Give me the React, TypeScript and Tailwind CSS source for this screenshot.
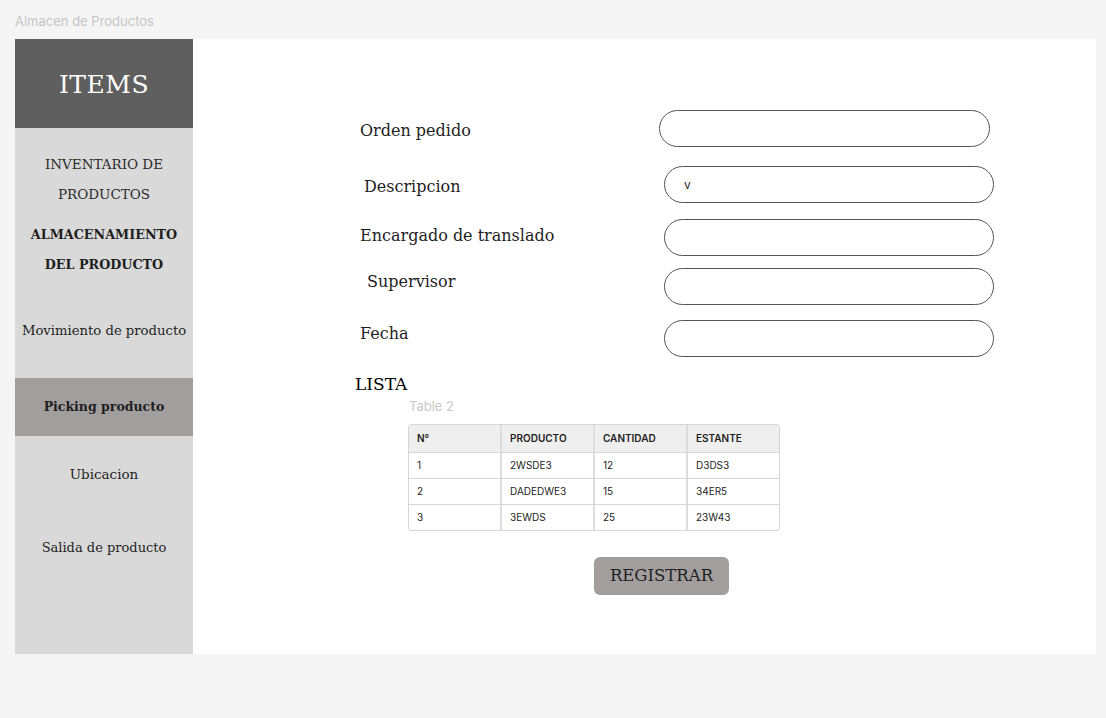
const serif = "font-['DejaVu_Serif',serif]";

const fields = [
  { label: "Orden pedido", row: "mt-[71px]", lbl: "pl-0 pt-[5px]", input: "ml-0 w-[331px]", value: "" },
  { label: "Descripcion", row: "mt-[19px]", lbl: "pl-[4px] pt-[5px]", input: "ml-[5px] w-[330px]", value: "v" },
  { label: "Encargado de translado", row: "mt-[16px]", lbl: "pl-0 pb-[3px]", input: "ml-[5px] w-[330px]", value: "" },
  { label: "Supervisor", row: "mt-[12px]", lbl: "pl-[7px] pb-[9px]", input: "ml-[5px] w-[330px]", value: "" },
  { label: "Fecha", row: "mt-[15px]", lbl: "pl-0 pb-[9px]", input: "ml-[5px] w-[330px]", value: "" },
];

const rows = [
  ["1", "2WSDE3", "12", "D3DS3"],
  ["2", "DADEDWE3", "15", "34ER5"],
  ["3", "3EWDS", "25", "23W43"],
];

const Sidebar = () => (
  <aside className={`w-[178px] shrink-0 bg-[#d9d9d9] text-[#1e1e1e] whitespace-nowrap ${serif}`}>
    <div className="h-[89px] bg-[#5f5f5f] flex items-center justify-center text-white text-[25px] tracking-[0.5px] pt-[3px]">
      ITEMS
    </div>
    <div className="mt-[21px] text-center text-[13.5px] leading-[30px] text-[#2a2a2a]">
      <div>INVENTARIO DE</div>
      <div>PRODUCTOS</div>
    </div>
    <div className="mt-[11px] text-center text-[12.75px] leading-[30px] font-bold">
      <div>ALMACENAMIENTO</div>
      <div>DEL PRODUCTO</div>
    </div>
    <div className="mt-[36px] text-center text-[13.2px] leading-[30px]">Movimiento de producto</div>
    <div className="mt-[32px] h-[58px] bg-[#a39e9e] flex items-center justify-center text-[12.5px] font-bold">
      Picking producto
    </div>
    <div className="mt-[23px] text-center text-[13.5px] leading-[30px]">Ubicacion</div>
    <div className="mt-[44px] text-center text-[13px] leading-[30px]">Salida de producto</div>
  </aside>
);

export default function App() {
  return (
    <div className="min-h-[718px] bg-[#f5f5f5] px-[15px] font-['Inter',sans-serif]">
      <div className="h-[39px] flex items-center text-[13px] text-[#c4c4c4] pt-[4px]">Almacen de Productos</div>
      <div className="flex h-[615px] w-[1081px]">
        <Sidebar />
        <main className="flex-1 bg-white pl-[167px]">
          {fields.map((f) => (
            <div key={f.label} className={`flex items-center ${f.row}`}>
              <div className={`w-[299px] text-[16px] text-[#1e1e1e] ${serif} ${f.lbl}`}>{f.label}</div>
              <div
                className={`h-[37px] rounded-full border border-[#555] flex items-center pl-[19px] text-[12px] text-[#1e1e1e] ${f.input}`}
              >
                {f.value}
              </div>
            </div>
          ))}

          <div className={`mt-[17px] -ml-[5px] text-[17px] leading-[20px] text-black ${serif}`}>LISTA</div>
          <div className="mt-[4px] ml-[49px] text-[13px] leading-[16px] text-[#c8c8c8]">Table 2</div>

          <div className="mt-[10px] ml-[48px] w-[372px] rounded-[3px] border border-[#d6d6d6] overflow-hidden text-[10px] text-[#1e1e1e]">
            <div className="grid grid-cols-[93px_93px_93px_1fr] bg-[#efefef] h-[27px] font-semibold">
              {["N°", "PRODUCTO", "CANTIDAD", "ESTANTE"].map((h, i) => (
                <div key={h} className={`flex items-center pl-[8px] ${i < 3 ? "border-r-2 border-[#dcdcdc]" : ""}`}>
                  {h}
                </div>
              ))}
            </div>
            {rows.map((r) => (
              <div key={r[0]} className="grid grid-cols-[93px_93px_93px_1fr] h-[26px] border-t border-[#d6d6d6]">
                {r.map((c, i) => (
                  <div key={i} className={`flex items-center pl-[8px] ${i < 3 ? "border-r-2 border-[#dcdcdc]" : ""}`}>
                    {c}
                  </div>
                ))}
              </div>
            ))}
          </div>

          <div className="mt-[26px] ml-[234px]">
            <button className={`w-[135px] h-[38px] rounded-[6px] bg-[#a39e9e] text-[16.5px] text-[#1e1e1e] ${serif}`}>
              REGISTRAR
            </button>
          </div>
        </main>
      </div>
    </div>
  );
}
